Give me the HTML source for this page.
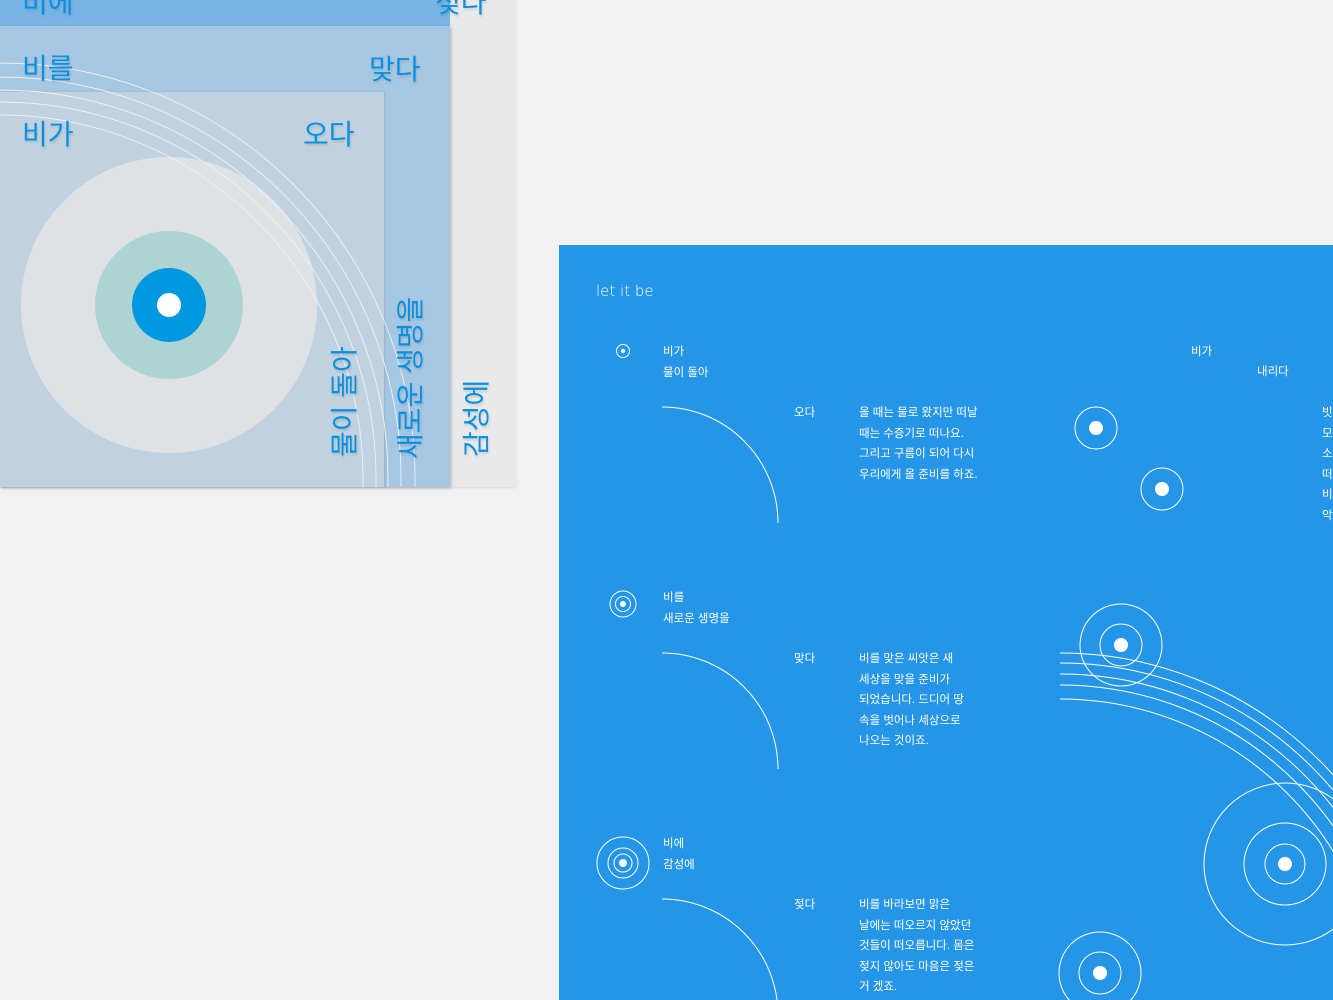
<!DOCTYPE html><html><head><meta charset="utf-8"><style>
body{margin:0;width:1333px;height:1000px;background:#f1f1f1;overflow:hidden;position:relative;font-family:"Liberation Sans","Noto Sans CJK KR",sans-serif}
.a{position:absolute}
.t{position:absolute;color:#fff;font-size:11.5px;line-height:20.5px;white-space:nowrap}
.k{position:absolute;color:#0a90e0;font-size:28px;line-height:30px;text-shadow:1px 2px 2px rgba(0,0,0,.12)}
.v{position:absolute;color:#0a90e0;font-size:28px;line-height:28px;white-space:nowrap;transform:rotate(-90deg);transform-origin:0 0;text-shadow:-2px 1px 2px rgba(0,0,0,.12)}
</style></head><body>
<div class="a" style="left:0;top:0;width:516px;height:487px;background:#e9e9e9;box-shadow:0 1px 2px rgba(0,0,0,.1)"></div>
<div class="a" style="left:0;top:0;width:450px;height:26px;background:#79b5e4"></div>
<div class="a" style="left:0;top:26px;width:450px;height:461px;background:#a6c7e2;box-shadow:1px 1px 3px rgba(0,0,0,.25)"></div>
<div class="a" style="left:0;top:92px;width:384px;height:395px;background:#c0d2e0;box-shadow:1px 0 2px rgba(0,0,0,.12)"></div>
<svg class="a" style="left:0;top:0" width="516" height="487">
<circle cx="169" cy="305" r="148" fill="#dfe2e5"/>
<g fill="none" stroke="#eef0f2" stroke-width="0.9">
<circle cx="0" cy="478" r="363"/><circle cx="0" cy="478" r="376"/><circle cx="0" cy="478" r="388"/><circle cx="0" cy="478" r="401"/><circle cx="0" cy="478" r="415"/>
</g>
<circle cx="169" cy="305" r="74" fill="#aed3d3"/>
<circle cx="169" cy="305" r="37" fill="#0098e0"/>
<circle cx="169" cy="305" r="12" fill="#fff"/>
</svg>
<div class="k" style="left:22px;top:-12px">비에</div>
<div class="k" style="left:435px;top:-12px">젖다</div>
<div class="k" style="left:22px;top:54px">비를</div>
<div class="k" style="left:369px;top:55px">맞다</div>
<div class="k" style="left:22px;top:120px">비가</div>
<div class="k" style="left:303px;top:120px">오다</div>
<div class="v" style="left:331px;top:457px">물이 돌아</div>
<div class="v" style="left:397px;top:459px">새로운 생명을</div>
<div class="v" style="left:463px;top:457px">감성에</div>

<div class="a" style="left:559px;top:245px;width:774px;height:755px;background:#2595e8"></div>
<svg class="a" style="left:559px;top:245px" width="774" height="755">
<g fill="none" stroke="#fff" stroke-width="1">
<path d="M103 162 A116 116 0 0 1 219 278"/>
<path d="M103 408 A116 116 0 0 1 219 524"/>
<path d="M103 654 A116 116 0 0 1 219 770"/>
<circle cx="64" cy="106" r="6.5"/>
<circle cx="64" cy="359" r="13"/><circle cx="64" cy="359" r="7.5"/>
<circle cx="64" cy="618" r="26"/><circle cx="64" cy="618" r="15"/><circle cx="64" cy="618" r="9"/>
<circle cx="537" cy="183" r="21"/><circle cx="603" cy="244" r="21"/>
<circle cx="562" cy="400" r="41"/><circle cx="562" cy="400" r="21"/>
<circle cx="726" cy="619" r="81"/><circle cx="726" cy="619" r="41"/><circle cx="726" cy="619" r="20"/>
<circle cx="541" cy="728" r="41"/><circle cx="541" cy="728" r="21"/>
<path d="M501 408 A367 367 0 0 1 868 775"/>
<path d="M501 418 A357 357 0 0 1 858 775"/>
<path d="M501 429 A346 346 0 0 1 847 775"/>
<path d="M501 440 A335 335 0 0 1 836 775"/>
<path d="M501 454 A321 321 0 0 1 822 775"/>
</g>
<g fill="#fff">
<circle cx="64" cy="106" r="2.2"/><circle cx="64" cy="359" r="3"/><circle cx="64" cy="618" r="4"/>
<circle cx="537" cy="183" r="7"/><circle cx="603" cy="244" r="7"/><circle cx="562" cy="400" r="7"/><circle cx="726" cy="619" r="7"/><circle cx="541" cy="728" r="7"/>
</g>
</svg>
<div class="t" style="left:596px;top:281px;font-size:15px;font-family:'DejaVu Sans',sans-serif;font-weight:200">let it be</div>
<div class="t" style="left:663px;top:342px">비가<br>물이 돌아</div>
<div class="t" style="left:794px;top:403px">오다</div>
<div class="t" style="left:859px;top:403px">올 때는 물로 왔지만 떠날<br>때는 수증기로 떠나요.<br>그리고 구름이 되어 다시<br>우리에게 올 준비를 하죠.</div>
<div class="t" style="left:1191px;top:342px">비가</div>
<div class="t" style="left:1257px;top:362px">내리다</div>
<div class="t" style="left:1322px;top:403px">빗<br>모<br>소<br>떠<br>비<br>악</div>
<div class="t" style="left:663px;top:588px">비를<br>새로운 생명을</div>
<div class="t" style="left:794px;top:649px">맞다</div>
<div class="t" style="left:859px;top:649px">비를 맞은 씨앗은 새<br>세상을 맞을 준비가<br>되었습니다. 드디어 땅<br>속을 벗어나 세상으로<br>나오는 것이죠.</div>
<div class="t" style="left:663px;top:834px">비에<br>감성에</div>
<div class="t" style="left:794px;top:895px">젖다</div>
<div class="t" style="left:859px;top:895px">비를 바라보면 맑은<br>날에는 떠오르지 않았던<br>것들이 떠오릅니다. 몸은<br>젖지 않아도 마음은 젖은<br>거 겠죠.</div>
</body></html>
